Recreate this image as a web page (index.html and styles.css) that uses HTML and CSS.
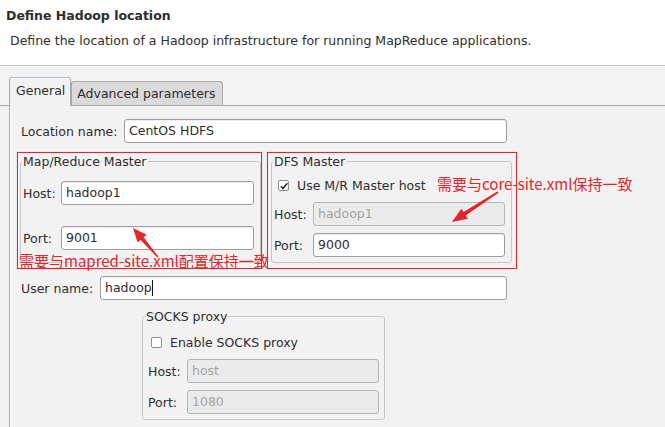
FILE: index.html
```html
<!DOCTYPE html>
<html lang="en">
<head>
	<meta charset="UTF-8">
	<title>Define Hadoop location</title>
	<link rel="stylesheet" href="styles.css">
</head>
<body>

	<div class="header">
		<h1 class="title">Define Hadoop location</h1>
		<p class="desc">Define the location of a Hadoop infrastructure for running MapReduce applications.</p>
	</div>

	<div class="tabbar">
		<span class="tab tab-active">General</span>
		<span class="tab">Advanced parameters</span>
	</div>

	<div class="panel">
		<div class="row row-loc">
			<span class="lbl">Location name:</span>
			<span class="field">CentOS HDFS</span>
		</div>

		<div class="masters">
			<!-- Map/Reduce -->
			<div class="mark mark-mr">
				<fieldset class="group group-mr">
					<legend>Map/Reduce Master</legend>
					<div class="frow"><span class="lbl">Host:</span><span class="field">hadoop1</span></div>
					<div class="frow frow-far"><span class="lbl">Port:</span><span class="field">9001</span></div>
				</fieldset>
			</div>
			<!-- DFS -->
			<div class="mark mark-dfs">
				<fieldset class="group group-dfs">
					<legend>DFS Master</legend>
					<div class="check">
						<span class="box"><svg width="10" height="10" viewBox="0 0 10 10"><path d="M1.8 5.2L4 7.6L8.4 2.2" fill="none" stroke="#2d2d2d" stroke-width="1.6"/></svg></span>
						Use M/R Master host
					</div>
					<div class="frow frow-first"><span class="lbl">Host:</span><span class="field off">hadoop1</span></div>
					<div class="frow frow-near"><span class="lbl">Port:</span><span class="field">9000</span></div>
				</fieldset>
			</div>
		</div>

		<div class="row row-user">
			<span class="lbl">User name:</span>
			<span class="field">hadoop<i class="caret"></i></span>
		</div>

		<fieldset class="group group-socks">
			<legend>SOCKS proxy</legend>
			<div class="check"><span class="box"></span>Enable SOCKS proxy</div>
			<div class="frow frow-first"><span class="lbl">Host:</span><span class="field off">host</span></div>
			<div class="frow frow-near"><span class="lbl">Port:</span><span class="field off">1080</span></div>
		</fieldset>
	</div>

	<!-- 标注 -->
	<div class="note note-mr">需要与mapred-site.xml配置保持一致</div>
	<div class="note note-dfs">需要与core-site.xml保持一致</div>
	<svg class="arrows" width="665" height="427" viewBox="0 0 665 427">
		<polygon fill="#e3262b" points="133,228 146.7,234.7 143.6,237.3 158.6,257 157.4,257.6 140.6,239.9 137.6,242.5"/>
		<polygon fill="#e3262b" points="452,222 467.9,218.8 465.7,215.5 498.5,192.8 497.6,191.3 463.5,212.1 461.3,208.8"/>
	</svg>

</body>
</html>
```

FILE: styles.css
```css
*{margin: 0;padding: 0;box-sizing: border-box;}
body{position: relative;width: 665px;height: 427px;overflow: hidden;background: #f2f2f2;color: #2d2d2d;font: 12.5px/15px "DejaVu Sans", sans-serif;}

.header{height: 66px;background: #fff;border-bottom: 1px solid #c6c6c6;padding: 8px 0 0 6px;}
.title{font-size: 12.5px;line-height: 15px;font-weight: bold;}
.desc{margin: 10px 0 0 4px;}

.tabbar{display: flex;align-items: flex-end;height: 40px;padding-left: 9px;border-bottom: 1px solid #a9a9a9;background: #f3f3f3;box-shadow: inset 0 1px 0 #fff;}
.tab{height: 24px;padding: 4px 6px 0 5px;border: 1px solid #a9a9a9;border-bottom: none;border-radius: 3px 3px 0 0;background: #dadada;white-space: nowrap;}
.tab-active{height: 29px;margin-bottom: -1px;padding: 5px 5px 0 6px;background: #f2f2f2;border-color: #a9b9cc #a9a9a9 #a9a9a9;box-shadow: inset 0 1px 0 #fff;}

.panel{margin-left: 9px;height: 322px;border-left: 1px solid #a9a9a9;box-shadow: inset 1px 0 0 #fff;padding: 13px 0 0 11px;}

.row{display: flex;align-items: center;width: 486px;}
.row-loc .lbl{width: 103px;}
.row-user{margin-top: 7px;}
.row-user .lbl{width: 79px;}
.row .field{flex: 1;}

.field{display: block;height: 24px;line-height: 22px;padding: 0 4px;border: 1px solid #9d9d9d;border-radius: 3px;background: #fff;box-shadow: inset 0 1px 1px rgba(0,0,0,.07);white-space: nowrap;}
.field.off{background: #ebebeb;color: #a4a4a4;border-color: #b6b6b6;box-shadow: none;}
.caret{display: inline-block;width: 1px;height: 16px;background: #111;vertical-align: -4px;}

.masters{display: flex;margin: 9px 0 0 -4px;}
.mark{height: 117px;border: 1px solid #e3262b;box-shadow: 0 0 1px rgba(227,38,43,.35);}
.mark-mr{width: 245px;}
.mark-dfs{width: 250px;margin-left: 5px;}

.group{border: 1px solid #c7c7c7;border-radius: 3px;}
.group legend{padding: 0 1px;margin-left: -1px;line-height: 15px;}
.group-mr{width: 241px;margin: 1px 0 0 2px;padding: 12px 4px 12px 2px;}
.group-dfs{width: 241px;margin: 1px 0 0 3px;padding: 9px 4px 5px 2px;}
.group-socks{width: 243px;margin: 9px 0 0 121px;padding: 11px 4px 5px 3px;}

.frow{display: flex;align-items: center;}
.frow .lbl{width: 38px;}
.frow-far{margin-top: 21px;}
.frow-first{margin-top: 9px;}
.frow-near{margin-top: 7px;}
.group-mr .frow .lbl{width: 38px;}
.group-dfs .frow .lbl,.group-socks .frow .lbl{width: 39px;}
.group-mr .field{width: 193px;}
.group-dfs .field,.group-socks .field{width: 192px;}
.group-socks .frow{margin-left: 2px;}

.check{display: flex;align-items: center;height: 15px;}
.box{display: block;width: 11px;height: 11px;margin: 0 8px 0 4px;border: 1px solid #8e8e8e;border-radius: 2px;background: #fff;}
.box svg{display: block;margin: -0.5px 0 0 -0.5px;}
.group-socks .box{margin: 0 8px 0 5px;}

.note{position: absolute;color: #e3262b;font: 15px/18px "Noto Sans CJK SC", sans-serif;white-space: nowrap;}
.note-mr{left: 19px;top: 252px;}
.note-dfs{left: 437px;top: 175px;}
.arrows{position: absolute;left: 0;top: 0;}
```
